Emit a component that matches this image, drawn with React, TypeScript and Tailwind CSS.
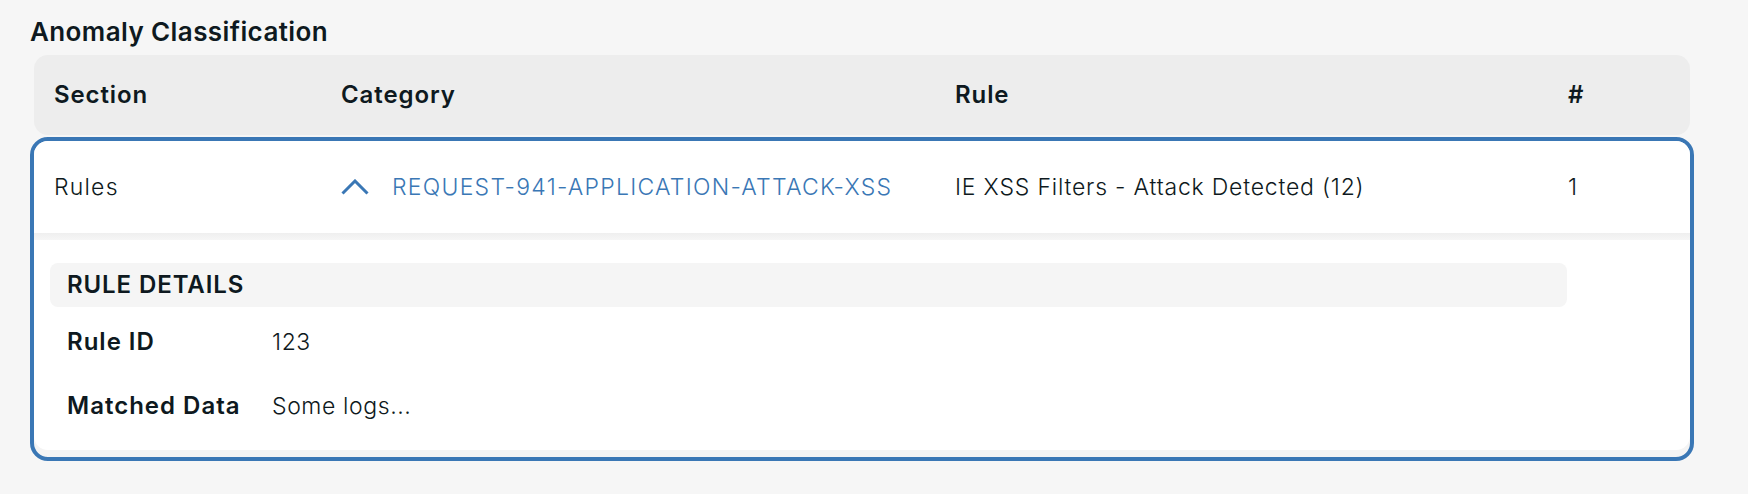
import React from 'react';

interface Anomaly {
  section: string;
  category: string;
  rule: string;
  count: number;
  ruleId: string;
  matchedData: string;
}

const anomalies: Anomaly[] = [
  {
    section: 'Rules',
    category: 'REQUEST-941-APPLICATION-ATTACK-XSS',
    rule: 'IE XSS Filters - Attack Detected (12)',
    count: 1,
    ruleId: '123',
    matchedData: 'Some logs...',
  },
];

const COLS = 'grid grid-cols-[287px_614px_613px_1fr] items-center';

function ChevronUp() {
  return (
    <svg width="28" height="16" viewBox="0 0 28 16" fill="none" className="shrink-0">
      <path d="M1.5 14.5 L14 2 L26.5 14.5" stroke="#3a77b5" strokeWidth="3" />
    </svg>
  );
}

function AnomalyRow({ item }: { item: Anomaly }) {
  return (
    <div className="rounded-[18px] border-4 border-[#3a77b5] overflow-hidden bg-[#f4f4f4]">
      <div className={`${COLS} h-[92px] bg-white text-[23px] font-light tracking-[0.8px]`}>
        <div className="px-5 tracking-[1.2px]">{item.section}</div>
        <div className="px-5 flex items-center gap-[23px] text-[#3a77b5]">
          <ChevronUp />
          <span className="tracking-[1.25px]">{item.category}</span>
        </div>
        <div className="px-5">{item.rule}</div>
        <div className="px-5">{item.count}</div>
      </div>
      <div className="h-[7px] bg-gradient-to-b from-[#efefef] to-[#f6f6f6]" />

      {/* expanded details */}
      <div className="bg-white rounded-b-[14px] pt-[23px] pb-[12px] pl-[16px]">
        <div className="w-[1517px] h-[44px] rounded-[8px] bg-[#f5f5f5] flex items-center pl-[17px] text-[24px] font-semibold tracking-[0.9px]">
          RULE DETAILS
        </div>
        <div className="mt-[3px] pl-[17px] text-[23px]">
          <div className="h-[64px] flex items-center">
            <span className="w-[205px] text-[24px] font-semibold tracking-[1px]">Rule ID</span>
            <span className="font-light tracking-[0.6px]">{item.ruleId}</span>
          </div>
          <div className="h-[64px] flex items-center">
            <span className="w-[205px] text-[24px] font-semibold tracking-[1px]">Matched Data</span>
            <span className="font-light tracking-[0.6px]">{item.matchedData}</span>
          </div>
        </div>
      </div>
      <div className="h-[7px]" />
    </div>
  );
}

export default function App() {
  return (
    <div className="min-h-screen bg-[#f6f6f6] [font-family:Inter,sans-serif] text-[#0e1920] pt-[16px] pl-[30px]">
      <h2 className="text-[26px] leading-[32px] font-semibold tracking-[0.4px]">Anomaly Classification</h2>
      <div className="mt-[7px] w-[1664px]">
        <div className={`${COLS} mx-[4px] h-[80px] rounded-[14px] bg-[#ededed] text-[24px] font-semibold tracking-[0.9px]`}>
          <div className="px-5">Section</div>
          <div className="px-5">Category</div>
          <div className="px-5">Rule</div>
          <div className="px-5">#</div>
        </div>
        <div className="mt-[2px]">
          {anomalies.map((a) => (
            <AnomalyRow key={a.category} item={a} />
          ))}
        </div>
      </div>
    </div>
  );
}
